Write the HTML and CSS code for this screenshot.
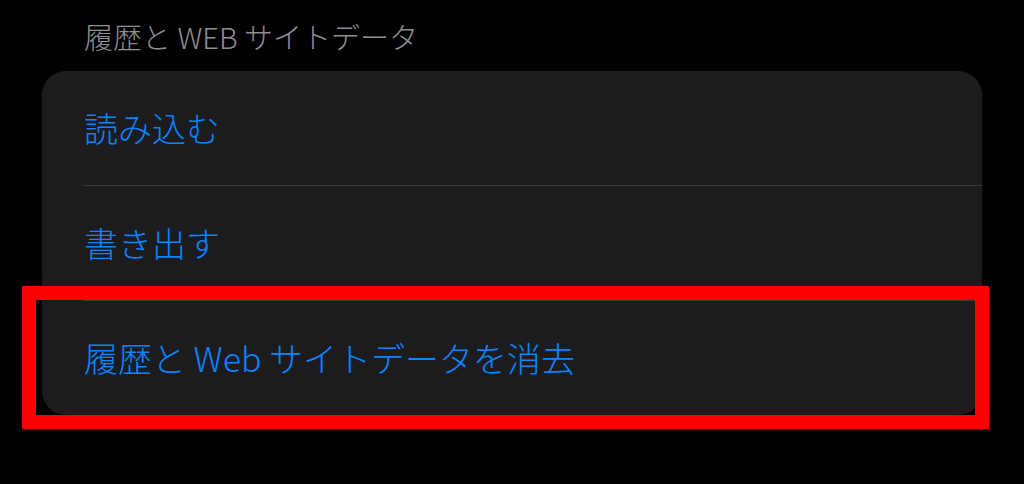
FILE: index.html
```html
<!DOCTYPE html>
<html lang="ja">
<head>
<meta charset="utf-8">
<link rel="stylesheet" href="styles.css">
</head>
<body>
<div class="page">
  <div class="section-header">履歴と WEB サイトデータ</div>
  <div class="card">
    <div class="row">読み込む</div>
    <div class="sep"></div>
    <div class="row">書き出す</div>
    <div class="sep"></div>
    <div class="row">履歴と Web サイトデータを消去</div>
  </div>
  <div class="highlight"></div>
</div>
</body>
</html>
```
FILE: styles.css
```css
html, body {
  margin: 0;
  padding: 0;
  background: #000;
}
.page {
  position: relative;
  width: 1024px;
  height: 484px;
  overflow: hidden;
  font-family: "Noto Sans CJK JP", "Noto Sans", sans-serif;
  font-weight: 300;
}
.section-header {
  padding: 16px 0 0 84px;
  height: 40px;
  line-height: 40px;
  font-size: 29px;
  color: #8e8e93;
}
.card {
  margin: 15px 0 0 42px;
  width: 940px;
  background: #1c1c1e;
  border-radius: 24px;
  overflow: hidden;
}
.row {
  height: 114px;
  display: flex;
  align-items: center;
  padding-left: 42px;
  font-size: 34px;
  color: #0a84ff;
  line-height: 1;
}
.sep {
  height: 1px;
  margin-left: 41px;
  background: #38383a;
}
.highlight {
  position: absolute;
  left: 22px;
  top: 286px;
  width: 967px;
  height: 143px;
  border: 14px solid #ff0000;
  box-sizing: border-box;
}
```
